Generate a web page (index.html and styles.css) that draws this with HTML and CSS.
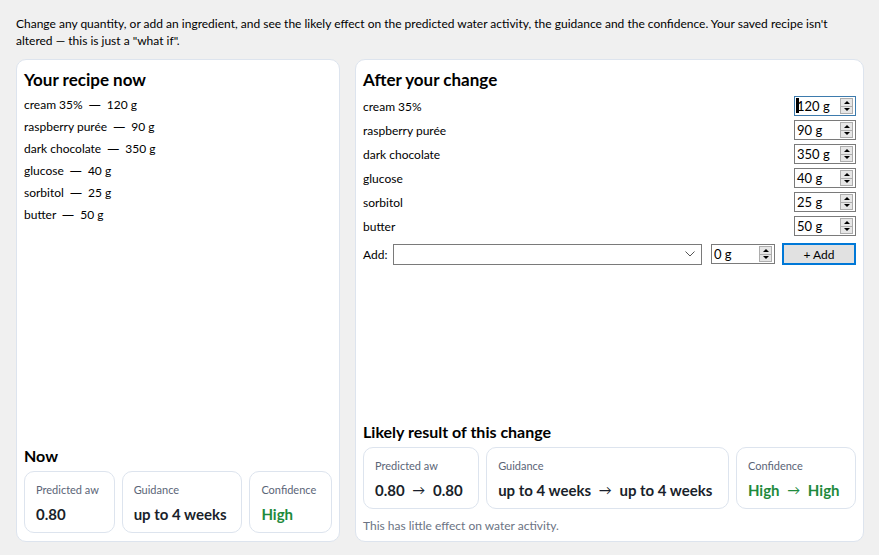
FILE: index.html
```html
<!DOCTYPE html>
<html lang="en">
<head>
    <meta charset="UTF-8">
    <title>What if</title>
    <link rel="stylesheet" href="styles.css">
</head>
<body class="wi-body">
    <p class="wi-intro">Change any quantity, or add an ingredient, and see the likely effect on the predicted water activity, the guidance and the confidence. Your saved recipe isn't altered — this is just a "what if".</p>

    <div class="wi-columns">
        <!-- current recipe -->
        <div class="wi-panel">
            <h2 class="wi-title">Your recipe now</h2>
            <ul class="wi-list">
                <li>cream 35% <span class="wi-dash">—</span> 120 g</li>
                <li>raspberry purée <span class="wi-dash">—</span> 90 g</li>
                <li>dark chocolate <span class="wi-dash">—</span> 350 g</li>
                <li>glucose <span class="wi-dash">—</span> 40 g</li>
                <li>sorbitol <span class="wi-dash">—</span> 25 g</li>
                <li>butter <span class="wi-dash">—</span> 50 g</li>
            </ul>
            <div class="wi-spacer"></div>
            <h3 class="wi-subtitle">Now</h3>
            <div class="wi-cards">
                <div class="wi-card">
                    <div class="wi-card-label">Predicted aw</div>
                    <div class="wi-card-value">0.80</div>
                </div>
                <div class="wi-card">
                    <div class="wi-card-label">Guidance</div>
                    <div class="wi-card-value">up to 4 weeks</div>
                </div>
                <div class="wi-card">
                    <div class="wi-card-label">Confidence</div>
                    <div class="wi-card-value wi-good">High</div>
                </div>
            </div>
        </div>

        <!-- edited recipe -->
        <div class="wi-panel">
            <h2 class="wi-title">After your change</h2>
            <div class="wi-rows">
                <div class="wi-row">
                    <span>cream 35%</span>
                    <div class="wi-spin wi-focus">
                        <span class="wi-spin-text wi-has-caret">120 g</span>
                        <span class="wi-spin-btns"><span class="wi-up"></span><span class="wi-down"></span></span>
                    </div>
                </div>
                <div class="wi-row">
                    <span>raspberry purée</span>
                    <div class="wi-spin">
                        <span class="wi-spin-text">90 g</span>
                        <span class="wi-spin-btns"><span class="wi-up"></span><span class="wi-down"></span></span>
                    </div>
                </div>
                <div class="wi-row">
                    <span>dark chocolate</span>
                    <div class="wi-spin">
                        <span class="wi-spin-text">350 g</span>
                        <span class="wi-spin-btns"><span class="wi-up"></span><span class="wi-down"></span></span>
                    </div>
                </div>
                <div class="wi-row">
                    <span>glucose</span>
                    <div class="wi-spin">
                        <span class="wi-spin-text">40 g</span>
                        <span class="wi-spin-btns"><span class="wi-up"></span><span class="wi-down"></span></span>
                    </div>
                </div>
                <div class="wi-row">
                    <span>sorbitol</span>
                    <div class="wi-spin">
                        <span class="wi-spin-text">25 g</span>
                        <span class="wi-spin-btns"><span class="wi-up"></span><span class="wi-down"></span></span>
                    </div>
                </div>
                <div class="wi-row">
                    <span>butter</span>
                    <div class="wi-spin">
                        <span class="wi-spin-text">50 g</span>
                        <span class="wi-spin-btns"><span class="wi-up"></span><span class="wi-down"></span></span>
                    </div>
                </div>
                <div class="wi-add-row">
                    <span>Add:</span>
                    <div class="wi-select">
                        <svg width="10" height="6" viewBox="0 0 10 6"><path d="M0.5 0.5 L5 5 L9.5 0.5" fill="none" stroke="#555" stroke-width="1"/></svg>
                    </div>
                    <div class="wi-spin wi-spin-add">
                        <span class="wi-spin-text">0 g</span>
                        <span class="wi-spin-btns"><span class="wi-up"></span><span class="wi-down"></span></span>
                    </div>
                    <button class="wi-add-btn">+ Add</button>
                </div>
            </div>
            <div class="wi-spacer"></div>
            <h3 class="wi-subtitle">Likely result of this change</h3>
            <div class="wi-cards">
                <div class="wi-card">
                    <div class="wi-card-label">Predicted aw</div>
                    <div class="wi-card-value">0.80 <span class="wi-arrow">→</span> 0.80</div>
                </div>
                <div class="wi-card">
                    <div class="wi-card-label">Guidance</div>
                    <div class="wi-card-value">up to 4 weeks <span class="wi-arrow">→</span> up to 4 weeks</div>
                </div>
                <div class="wi-card">
                    <div class="wi-card-label">Confidence</div>
                    <div class="wi-card-value wi-good">High <span class="wi-arrow">→</span> High</div>
                </div>
            </div>
            <p class="wi-note">This has little effect on water activity.</p>
        </div>
    </div>
</body>
</html>
```

FILE: styles.css
```css
.wi-body {
    margin: 0;
    padding: 15px 15px 13px 16px;
    background-color: #f0f0f0;
    font-family: Lato, "Noto Sans", sans-serif;
    font-size: 12px;
    color: #000;
    height: 555px;
    box-sizing: border-box;
    display: flex;
    flex-direction: column;
}
.wi-intro {
    margin: 0 0 10px 0;
    line-height: 17px;
}
.wi-columns {
    flex: 1;
    display: flex;
    gap: 15px;
}
.wi-panel {
    background-color: #fff;
    border: 1px solid #dde4ee;
    border-radius: 10px;
    padding: 10px 7px 8px 7px;
    display: flex;
    flex-direction: column;
}
.wi-panel:first-child {
    width: 308px;
}
.wi-panel:last-child {
    flex: 1;
}
.wi-title {
    margin: 0 0 4px 0;
    font-size: 17px;
    font-weight: bold;
    line-height: 20px;
}
.wi-list {
    list-style: none;
    margin: 0;
    padding: 0;
}
.wi-list li {
    line-height: 22px;
}
.wi-dash {
    margin: 0 3px;
    font-family: "Noto Sans", sans-serif;
}
.wi-spacer {
    flex: 1;
}
.wi-subtitle {
    margin: 0 0 6px 0;
    font-size: 16px;
    font-weight: bold;
    line-height: 18px;
}
.wi-cards {
    display: flex;
    gap: 7px;
}
.wi-card {
    flex: 1 1 auto;
    border: 1px solid #dde4ee;
    border-radius: 10px;
    padding: 10px 11px 9px 11px;
}
.wi-card-label {
    font-size: 11px;
    color: #5b6577;
    line-height: 16px;
    white-space: nowrap;
}
.wi-card-value {
    margin-top: 7px;
    font-size: 15px;
    font-weight: bold;
    color: #1a1f2b;
    line-height: 18px;
    height: 18px;
    white-space: nowrap;
}
.wi-good {
    color: #1e8a3c;
}
.wi-arrow {
    font-size: 13px;
    font-weight: normal;
    vertical-align: 1px;
    margin: 0 4px;
}
.wi-note {
    margin: 9px 0 0 0;
    font-size: 12px;
    color: #6b7383;
}
.wi-row {
    display: flex;
    justify-content: space-between;
    align-items: center;
    height: 24px;
}
.wi-spin {
    display: flex;
    align-items: center;
    width: 60px;
    height: 18px;
    border: 1px solid #7a7a7a;
    background-color: #fff;
}
.wi-focus {
    border-color: #3d7bad;
}
.wi-spin-text {
    flex: 1;
    padding-left: 2px;
    font-size: 13px;
    position: relative;
}
.wi-has-caret::before {
    content: "";
    position: absolute;
    left: 1px;
    top: 0;
    width: 3px;
    height: 15px;
    background-color: #000;
}
.wi-spin-btns {
    display: flex;
    flex-direction: column;
    width: 11px;
    height: 14px;
    margin-right: 2px;
    border: 1px solid #adadad;
    background-color: #e6e6e6;
}
.wi-up, .wi-down {
    flex: 1;
    display: flex;
    justify-content: center;
    align-items: center;
}
.wi-up::before {
    content: "";
    border-left: 3px solid transparent;
    border-right: 3px solid transparent;
    border-bottom: 3px solid #000;
}
.wi-down {
    border-top: 1px solid #adadad;
}
.wi-down::before {
    content: "";
    border-left: 3px solid transparent;
    border-right: 3px solid transparent;
    border-top: 3px solid #000;
}
.wi-add-row {
    display: flex;
    align-items: center;
    gap: 6px;
    margin-top: 5px;
}
.wi-select {
    flex: 1;
    height: 19px;
    border: 1px solid #7a7a7a;
    display: flex;
    justify-content: flex-end;
    align-items: center;
    padding-right: 6px;
    margin-right: 3px;
}
.wi-spin-add {
    width: 62px;
}
.wi-add-btn {
    width: 74px;
    height: 22px;
    margin-left: 1px;
    border: 2px solid #0078d7;
    background-color: #e1e1e1;
    font-family: inherit;
    font-size: 12px;
    color: #000;
    padding: 0;
}
```
